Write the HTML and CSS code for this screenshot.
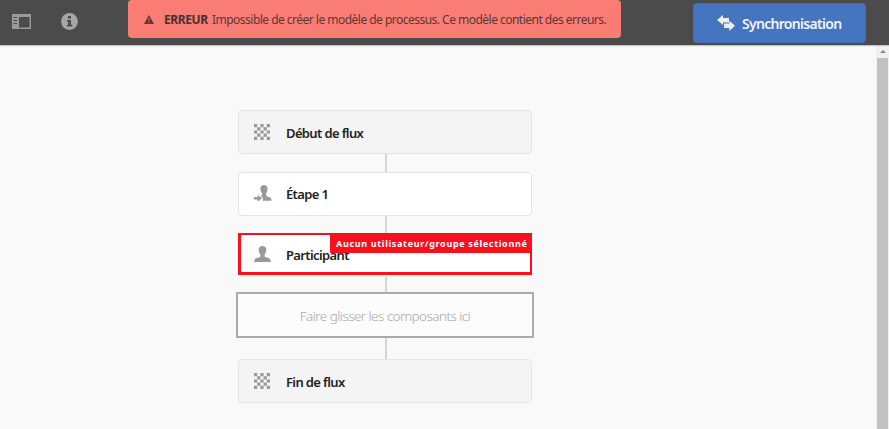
FILE: index.html
```html
<!DOCTYPE html>
<html lang="fr">
<head>
<meta charset="utf-8">
<title>Modèle de processus</title>
<link rel="stylesheet" href="styles.css">
</head>
<body>
<svg class="defs" width="0" height="0">
  <symbol id="checker" viewBox="0 0 16 16">
    <path d="M0 0h3.2v3.2H0zM6.4 0h3.2v3.2H6.4zM12.8 0H16v3.2h-3.2zM3.2 3.2h3.2v3.2H3.2zM9.6 3.2h3.2v3.2H9.6zM0 6.4h3.2v3.2H0zM6.4 6.4h3.2v3.2H6.4zM12.8 6.4H16v3.2h-3.2zM3.2 9.6h3.2v3.2H3.2zM9.6 9.6h3.2v3.2H9.6zM0 12.8h3.2V16H0zM6.4 12.8h3.2V16H6.4zM12.8 12.8H16V16h-3.2z"/>
  </symbol>
</svg>
<header class="toolbar">
  <svg class="rail-icon" viewBox="0 0 19 15">
    <path fill-rule="evenodd" d="M0 0h19v15H0zM7 3v10.5h10.5V3zM1.500 3v1H5V3zM1.500 6v1H5V6zM1.500 9v1H5V9z"/>
  </svg>
  <svg class="info-icon" viewBox="0 0 17 17">
    <circle cx="8.5" cy="8.5" r="8.4"/>
    <path class="info-mark" d="M7 3h3v2.600H7zM6 7h4v4.800h1.200v1.700H6v-1.700h1.200V8.700H6z"/>
  </svg>
  <div class="alert">
    <svg class="alert-icon" viewBox="0 0 10 9">
      <path d="M5 0l5 9H0z"/><path class="alert-mark" d="M4.500 3h1v3h-1zM4.500 6.900h1v1h-1z"/>
    </svg>
    <strong>ERREUR</strong>
    <span>Impossible de créer le modèle de processus. Ce modèle contient des erreurs.</span>
  </div>
  <button class="sync">
    <svg class="sync-icon" viewBox="0 0 18 16">
      <path d="M0 5l6-5v3h6v4.400H6V10zM18 10.800L12.400 16v-3H7V8.600h5.400V5.800z"/>
    </svg>
    <span>Synchronisation</span>
  </button>
</header>
<main class="workspace">
  <div class="flow">
    <div class="step terminal"><svg class="checker"><use href="#checker"/></svg><span class="label">Début de flux</span></div>
    <div class="link"></div>
    <div class="step">
      <svg class="assign" viewBox="0 0 18 17"><path d="M10 0c2.400 0 3.800 1.700 3.600 4.300-.1 1.700-.7 3-1.500 3.900v2.100c0 .8 1.300 1.200 3 1.800 1.800.6 2.400 1.500 2.400 3.700H8.500L9 13.200 6.500 10.600c1.200-.4 1.600-.5 1.600-1.200V8.200C7 7 6.400 5.500 6.400 4 6.400 1.500 7.700 0 10 0zM0 12h3.700V9.800L8 13.200l-4.300 3.600v-2.300H0z"/></svg>
      <span class="label">Étape 1</span>
    </div>
    <div class="link"></div>
    <div class="step invalid">
      <svg class="person" viewBox="0 0 17 16"><path d="M8.500 0c2.400 0 4 1.600 3.800 4.400-.1 1.700-.8 3.200-1.700 4.100v1.700c0 .6 1.100 1 3.100 1.500 2.300.6 3 1.700 3.100 4.300H.2c.1-2.600.8-3.700 3.100-4.300 2-.5 3.100-.9 3.100-1.500V8.500c-.9-.9-1.600-2.400-1.700-4.100C4.500 1.600 6.100 0 8.500 0z"/></svg>
      <span class="label">Participant</span>
      <span class="badge">Aucun utilisateur/groupe sélectionné</span>
    </div>
    <div class="link short"></div>
    <div class="drop"><span>Faire glisser les composants ici</span></div>
    <div class="link long"></div>
    <div class="step terminal"><svg class="checker"><use href="#checker"/></svg><span class="label">Fin de flux</span></div>
  </div>
  <div class="scrollbar"><div class="arrow"></div><div class="thumb"></div></div>
</main>
</body>
</html>
```
FILE: styles.css
```css
* { box-sizing: border-box; }
html, body { height: 100%; }
body { margin: 0; overflow: hidden; display: flex; flex-direction: column; background: #f9f9f9; color: #222; font-family: "Noto Sans", sans-serif; }
svg { display: block; flex: none; }
.defs { position: absolute; }
.toolbar { height: 45px; flex: none; display: flex; align-items: flex-start; background: #4b4b4b; box-shadow: 0 1px 1px #c4c4c4; z-index: 1; }
.rail-icon { width: 19px; height: 15px; margin: 14px 0 0 12px; fill: #999; }
.info-icon { width: 17px; height: 17px; margin: 13px 0 0 30px; fill: #a5a5a5; }
.info-mark { fill: #4b4b4b; }
.alert { width: 493px; height: 38px; margin-left: 50px; padding-left: 16px; display: flex; align-items: center; background: #fa7d75; border-radius: 4px; color: #5b3836; font-size: 12px; white-space: nowrap; }
.alert-icon { width: 10px; height: 9px; margin-right: 10px; fill: #613331; }
.alert-mark { fill: #fa7d75; }
.alert strong { width: 48px; color: #4a3030; letter-spacing: -.4px; }
.alert span { letter-spacing: -.52px; }
.sync { width: 173px; height: 40px; margin: 3px 0 0 72px; padding: 0 0 0 23px; display: flex; align-items: center; border: 1px solid #3f70b8; border-radius: 4px; background: #4675c0; color: #f0f3f8; font: 600 14px "Noto Sans", sans-serif; letter-spacing: -.7px; }
.sync-icon { width: 18px; height: 16px; margin-right: 7px; fill: #eee; }
.workspace { flex: 1; display: flex; justify-content: space-between; }
.flow { width: 294px; margin: 65px 0 0 238px; }
.step { position: relative; height: 44px; padding-left: 15px; display: flex; align-items: center; background: #fff; border: 1px solid #e4e4e4; border-radius: 4px; }
.step svg { fill: #999; }
.terminal { background: #f4f4f4; }
.checker { width: 16px; height: 16px; }
.assign { width: 18px; height: 17px; }
.person { width: 17px; height: 16px; }
.label { padding-top: 1px; font-size: 13px; font-weight: 600; letter-spacing: -.63px; white-space: nowrap; }
.checker + .label { margin-left: 16px; }
.assign + .label { margin-left: 14px; }
.person + .label { margin-left: 15px; padding-top: 2px; }
.link { width: 1.500px; height: 17.500px; margin-left: 147px; background: #d4d4d4; }
.invalid { height: 42px; padding-left: 13px; border: 3px solid #fa0f1e; border-width: 2px 2px 3px 3px; border-radius: 0; box-shadow: 0 2px 0 #f4f4f4; }
.badge { position: absolute; top: -1px; right: -2px; width: 202px; height: 19px; padding-left: 6px; background: #fa0f1e; color: #fff; font-size: 9px; font-weight: 700; line-height: 19px; letter-spacing: .66px; white-space: nowrap; }
.link.short { height: 15px; margin-top: 2px; }
.drop { width: 298px; height: 46px; margin-left: -2px; padding-top: 2px; display: flex; align-items: center; justify-content: center; border: 2px solid #ababab; background: #fcfcfc; color: #a8a8a8; font-size: 13.5px; font-weight: 300; letter-spacing: -.56px; }
.link.long { height: 21px; }
.scrollbar { width: 13px; background: #f1f1f1; padding: 1px 1px 0; }
.arrow { width: 0; height: 0; margin: 4px auto 5px; border: 3px solid transparent; border-top: 0; border-bottom: 3px solid #888; }
.thumb { height: 380px; background: #c1c1c1; }
```
